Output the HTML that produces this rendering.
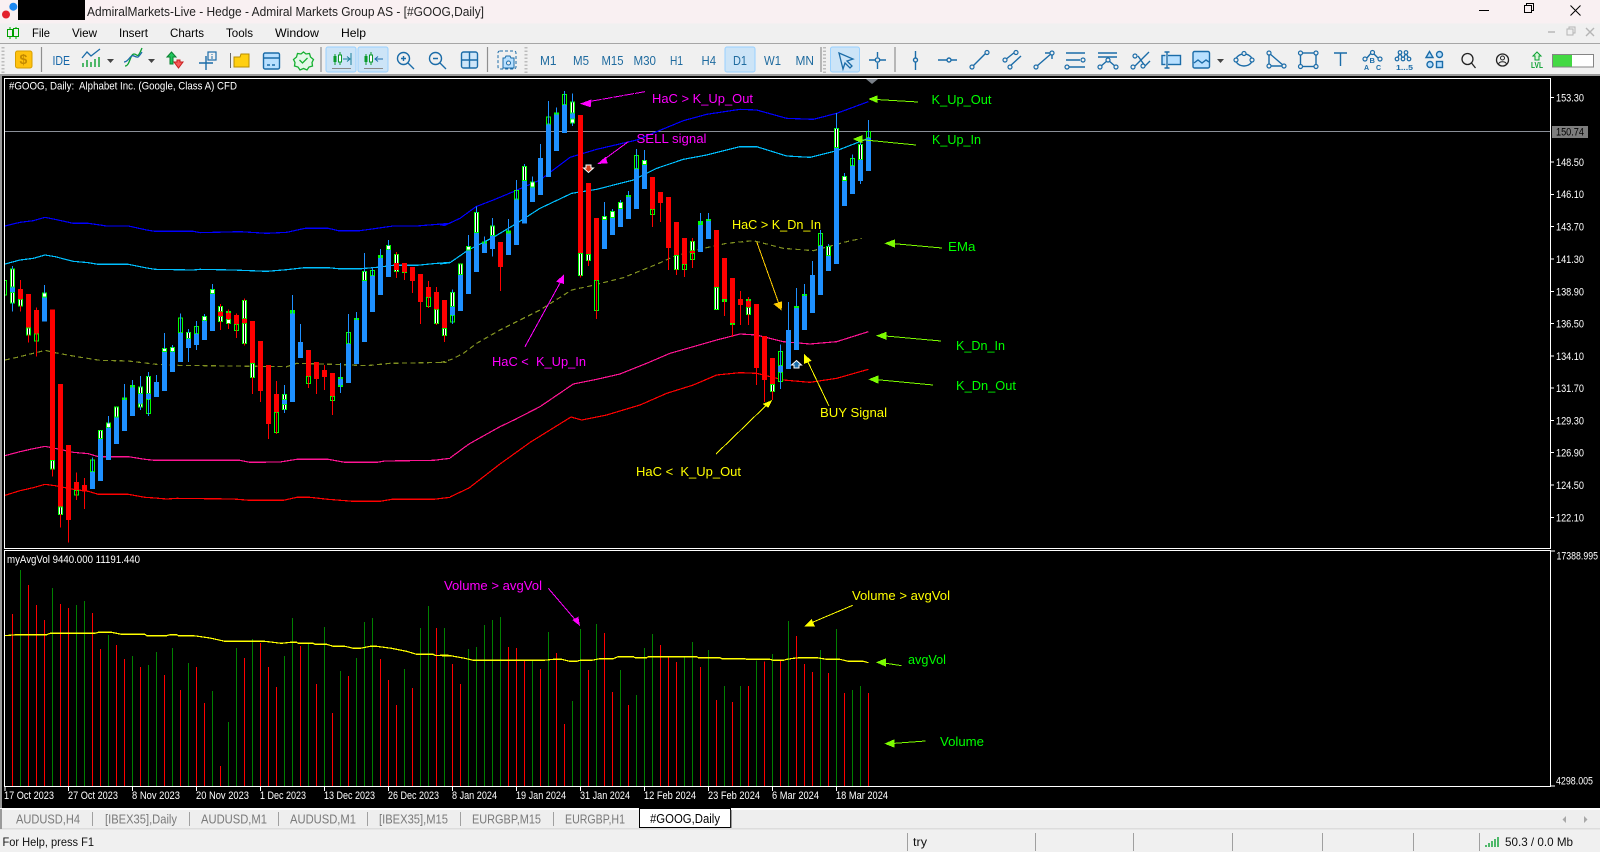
<!DOCTYPE html>
<html><head><meta charset="utf-8"><title>AdmiralMarkets-Live</title>
<style>
html,body{margin:0;padding:0;background:#000;width:1600px;height:852px;overflow:hidden}
svg{display:block}
text{font-family:"Liberation Sans",sans-serif;font-size:12px;white-space:pre}
.m{fill:#000}
.tf{fill:#1f6b9f;font-size:13px}
.w{fill:#fff;font-size:11px}
.a{font-size:13px}
.tab{fill:#7a7a7a;font-size:13px}
.c{fill:none;stroke:#1b6ca8;stroke-width:1.4}
.cf{fill:#b8e0ff;stroke:#1b6ca8;stroke-width:1.4}
.n{fill:#f0f0f0;stroke:#1b6ca8;stroke-width:1.2}
.crisp path,.crisp polyline{fill:none;shape-rendering:crispEdges}
</style></head><body>
<svg xmlns="http://www.w3.org/2000/svg" width="1600" height="852" viewBox="0 0 1600 852">
<defs><clipPath id="cp"><rect x="5" y="79" width="1545" height="469"/></clipPath></defs>
<rect width="1600" height="852" fill="#000"/>
<!-- title bar -->
<rect width="1600" height="23.5" fill="#f9f0f2"/>
<circle cx="6" cy="14.5" r="4" fill="#e3202c"/><circle cx="13.3" cy="6.7" r="4" fill="#1e88f0"/>
<rect x="18" width="67" height="20" fill="#000"/>
<text x="87" y="16" textLength="397" lengthAdjust="spacingAndGlyphs" style="font-size:13px" fill="#222">AdmiralMarkets-Live - Hedge - Admiral Markets Group AS - [#GOOG,Daily]</text>
<path d="M1479 10.5H1489" stroke="#000" fill="none"/>
<path d="M1524.5 12.5h7v-7h-7zM1526.5 5V3.5h7v7H1532" stroke="#000" fill="none"/>
<path d="M1570.5 5.5l10 10M1580.5 5.5l-10 10" stroke="#000" fill="none"/>
<!-- menu -->
<rect y="23.5" width="1600" height="20" fill="#f0f0f0"/>
<path d="M10 27v12M16 27v12" stroke="#00a000" fill="none"/><rect x="7.5" y="29.5" width="5" height="7" fill="#f0f0f0" stroke="#00a000"/><rect x="13.5" y="28.5" width="5" height="8" fill="#f0f0f0" stroke="#00a000"/>
<text class="m" x="32" y="37" textLength="18" lengthAdjust="spacingAndGlyphs">File</text>
<text class="m" x="72" y="37" textLength="25" lengthAdjust="spacingAndGlyphs">View</text>
<text class="m" x="119" y="37" textLength="29" lengthAdjust="spacingAndGlyphs">Insert</text>
<text class="m" x="170" y="37" textLength="34" lengthAdjust="spacingAndGlyphs">Charts</text>
<text class="m" x="226" y="37" textLength="27" lengthAdjust="spacingAndGlyphs">Tools</text>
<text class="m" x="275" y="37" textLength="44" lengthAdjust="spacingAndGlyphs">Window</text>
<text class="m" x="341" y="37" textLength="25" lengthAdjust="spacingAndGlyphs">Help</text>
<path d="M1548 32h7" stroke="#b5b5b5" stroke-width="1.4"/>
<path d="M1567 29h6v6h-6zM1569 29v-2h6v6h-2" stroke="#b5b5b5" fill="none"/>
<path d="M1586 28l8 8M1594 28l-8 8" stroke="#b5b5b5" stroke-width="1.4"/>
<!-- toolbar -->
<rect y="43" width="1600" height="33" fill="#f0f0f0"/>
<rect y="43" width="1600" height="1" fill="#a6a6a6"/>
<rect y="74" width="1600" height="2" fill="#9c9c9c"/>
<path d="M3 47v26M526 47v26M824.5 47v26" stroke="#bcbcbc" stroke-width="3" stroke-dasharray="1.5 2" fill="none"/>
<rect x="15.5" y="51" width="16.5" height="17" rx="2" fill="#ffc20e" stroke="#d79f00"/>
<text x="19.5" y="64" style="font-size:14px;font-weight:bold" fill="#c48a00">$</text>
<path d="M41.5 47v25M321 47v25M487.5 47v25M821 47v25M895 47v25" stroke="#8f8f8f" stroke-width="1.2" fill="none"/>
<text x="52.5" y="65" textLength="17.5" lengthAdjust="spacingAndGlyphs" style="font-size:13px" fill="#1566a8">IDE</text>
<!-- chart icon -->
<path d="M83 67v-4M87 67v-7M91 67v-5M95 67v-8M99 67v-10" stroke="#0aa030" stroke-width="1.4" fill="none"/>
<path d="M82 58l5-6 4 4 9-7" stroke="#1b6ca8" stroke-width="1.3" fill="none"/>
<path d="M107 59h7l-3.5 4z" fill="#444"/>
<path d="M125 66c5 0 5-12 9-12s3 6 8-6" stroke="#0aa030" stroke-width="1.3" fill="none"/><path d="M124 62c5 0 6-8 10-6s4 2 8-4" stroke="#1b6ca8" stroke-width="1.3" fill="none"/>
<path d="M148 59h7l-3.5 4z" fill="#444"/>
<path d="M167 57l4.5-5 4.5 5h-3v7h-3v-7z" fill="#22c55e" stroke="#0a8030"/><path d="M174 62h3v-2h3v2h3l-4.5 6z" fill="#f65a5a" stroke="#c81e1e"/>
<path d="M199 63h14M206 56v14" class="c"/><rect x="208" y="52" width="8" height="8" class="n"/><path d="M212 54v1M212 56v3" stroke="#1b6ca8"/>
<path d="M230.5 53v15" stroke="#666" fill="none"/><path d="M234 57h6l1-3h8v13h-15z" fill="#ffcf0f" stroke="#b78c00"/>
<rect x="263.5" y="53" width="16" height="16" rx="1.5" class="cf"/><path d="M263.5 58h16M267 65h3M272 65h3" class="c"/>
<path d="M303.500 52l2.500 2 3.500-.5 1 3.500 3 2.500-1.500 3 .5 3.500-3.500 1-2 3-3.500-1.500-3.500 1.500-2-3-3.500-1 .5-3.500-1.500-3 3-2.500 1-3.500 3.500.5z" fill="#e4f8e8" stroke="#15b030" stroke-width="1.3"/><path d="M299.500 60l3 3 5-5" fill="none" stroke="#15b030" stroke-width="1.3"/>
<rect x="326" y="47" width="30" height="25" rx="2" fill="#cce4f7" stroke="#99d1ff"/><rect x="358" y="47" width="30" height="25" rx="2" fill="#cce4f7" stroke="#99d1ff"/>
<path d="M335 54v11M340 52v13" stroke="#0a9a2a" fill="none"/><rect x="333.5" y="56" width="3" height="6" fill="#0a9a2a"/><rect x="338.5" y="55" width="3" height="7" fill="#fff" stroke="#0a9a2a"/>
<path d="M343 59h6M347 56.5l3 2.5-3 2.5M351 53v12" stroke="#1b7f9a" fill="none"/><path d="M332 68.5h19" stroke="#8a8a8a"/>
<path d="M366 54v11M371 52v13" stroke="#0a9a2a" fill="none"/><rect x="364.5" y="56" width="3" height="6" fill="#0a9a2a"/><rect x="369.5" y="55" width="3" height="7" fill="#fff" stroke="#0a9a2a"/>
<path d="M375 59h8M378 56.5l-3 2.5 3 2.5" stroke="#1b6ca8" fill="none"/><path d="M364 68.5h19" stroke="#8a8a8a"/>
<circle cx="403.5" cy="58.5" r="6" class="c"/><path d="M408 63l6 6M401 58.5h5M403.5 56v5" class="c"/>
<circle cx="435.5" cy="58.5" r="6" class="c"/><path d="M440 63l6 6M433 58.5h5" class="c"/>
<rect x="461.5" y="52" width="16" height="16" rx="2" class="cf" fill-opacity=".6"/><path d="M469.5 52v16M461.5 60h16" class="c"/>
<rect x="498" y="51" width="18" height="18" rx="2" fill="none" stroke="#1b6ca8" stroke-dasharray="3 2"/><path d="M503 58h2l1-2h4l1 2h3v10h-11z" fill="#b8e0ff" stroke="#1b6ca8"/><circle cx="508.5" cy="63" r="2" fill="#f0f0f0" stroke="#1b6ca8"/>
<!-- timeframes -->
<rect x="725" y="47" width="30" height="25" rx="2" fill="#cce4f7" stroke="#99d1ff"/>
<text class="tf" x="540" y="65" textLength="16.5" lengthAdjust="spacingAndGlyphs">M1</text>
<text class="tf" x="573" y="65" textLength="16" lengthAdjust="spacingAndGlyphs">M5</text>
<text class="tf" x="601.5" y="65" textLength="22" lengthAdjust="spacingAndGlyphs">M15</text>
<text class="tf" x="633.5" y="65" textLength="22.5" lengthAdjust="spacingAndGlyphs">M30</text>
<text class="tf" x="670" y="65" textLength="13" lengthAdjust="spacingAndGlyphs">H1</text>
<text class="tf" x="701.5" y="65" textLength="14.5" lengthAdjust="spacingAndGlyphs">H4</text>
<text class="tf" x="733" y="65" textLength="14" lengthAdjust="spacingAndGlyphs">D1</text>
<text class="tf" x="764" y="65" textLength="17" lengthAdjust="spacingAndGlyphs">W1</text>
<text class="tf" x="795.5" y="65" textLength="18.5" lengthAdjust="spacingAndGlyphs">MN</text>
<!-- draw tools -->
<rect x="830.5" y="47" width="29" height="25" rx="2" fill="#cce4f7" stroke="#99d1ff"/>
<path d="M839 53l14 6-6 2 5 5-2 2-5-5-2 6z" fill="#cce4f7" stroke="#1b6ca8" stroke-width="1.3"/>
<path d="M869 60h6M880 60h6M877.5 52v5M877.5 63v6" class="c"/><circle cx="877.5" cy="60" r="2.2" class="c"/>
<path d="M915.5 51v7M915.5 62v8" class="c"/><circle cx="915.5" cy="60" r="2" class="c"/>
<path d="M938 60h9M951 60h6" class="c"/><circle cx="949" cy="60" r="2" class="c"/>
<path d="M973 66l13-13" class="c"/><circle cx="972" cy="67" r="2" class="n"/><circle cx="987" cy="52.5" r="2" class="n"/>
<path d="M1005 60l10-8M1009 67l12-11" class="c"/><circle cx="1005" cy="60" r="2" class="n"/><circle cx="1016" cy="52.5" r="2" class="n"/><circle cx="1010" cy="67" r="2" class="n"/>
<path d="M1037 66l15-13M1045 53h7v6" class="c"/><circle cx="1036" cy="67" r="2" class="n"/><circle cx="1052" cy="53" r="2" class="n"/>
<path d="M1066 53h19M1066 60h14M1068 67h17" class="c"/><circle cx="1083" cy="60" r="2" class="n"/><circle cx="1067" cy="67" r="2" class="n"/>
<path d="M1098 53h19M1098 57h19M1100 67l8-7 8 7" class="c"/><circle cx="1100" cy="67" r="2" class="n"/><circle cx="1108" cy="60" r="2" class="n"/><circle cx="1116" cy="67" r="2" class="n"/>
<path d="M1134 67l15-15M1138 56l7 10M1144 67l6-6" class="c"/><circle cx="1133" cy="67" r="2" class="n"/><circle cx="1135" cy="56" r="2" class="n"/><circle cx="1143" cy="66" r="2" class="n"/>
<rect x="1162" y="55.5" width="18.5" height="9" class="cf"/><rect x="1165.5" y="52.5" width="2.5" height="15" fill="#f0f0f0"/><path d="M1167 52v16M1164.5 52h5M1164.5 68h5" class="c"/>
<rect x="1193" y="51.5" width="16.5" height="16.5" rx="1.5" class="cf"/><path d="M1194 63l4-3 4 3 4-3 3 2" class="c"/>
<path d="M1217 59h7l-3.5 4z" fill="#444"/>
<ellipse cx="1244" cy="60" rx="8" ry="6" class="c"/><circle cx="1244" cy="53.5" r="2" class="n"/><circle cx="1236" cy="60" r="2" class="n"/><circle cx="1252" cy="60" r="2" class="n"/>
<path d="M1269 53v13h15z" class="c"/><circle cx="1269" cy="53" r="2" class="n"/><circle cx="1269" cy="66" r="2" class="n"/><circle cx="1284" cy="66" r="2" class="n"/>
<rect x="1300.5" y="53" width="15.5" height="13.5" class="c"/><circle cx="1300.5" cy="53" r="2" class="n"/><circle cx="1316" cy="53" r="2" class="n"/><circle cx="1300.5" cy="66.5" r="2" class="n"/><circle cx="1316" cy="66.5" r="2" class="n"/>
<path d="M1334 53h13M1340.5 53v13" class="c"/>
<path d="M1366 59l6-7 7 7" class="c"/><circle cx="1372.5" cy="52.5" r="2" class="n"/><circle cx="1365" cy="59" r="2" class="n"/><circle cx="1380" cy="59" r="2" class="n"/>
<text x="1369.5" y="63" style="font-size:7.5px;font-weight:bold" fill="#1b6ca8">B</text><text x="1364" y="70" style="font-size:7px;font-weight:bold" fill="#1b6ca8">A</text><text x="1376" y="70" style="font-size:7px;font-weight:bold" fill="#1b6ca8">C</text>
<path d="M1397 59l3-6 3 6 3-6 3 6" class="c"/><circle cx="1400" cy="52.5" r="1.8" class="n"/><circle cx="1406" cy="52.5" r="1.8" class="n"/><circle cx="1397" cy="59" r="1.8" class="n"/><circle cx="1403" cy="59" r="1.8" class="n"/><circle cx="1409" cy="59" r="1.8" class="n"/>
<text x="1396" y="70" textLength="17" lengthAdjust="spacingAndGlyphs" style="font-size:7.5px;font-weight:bold" fill="#1b6ca8">1...5</text>
<path d="M1429.5 51.5l3.500 6h-7z" class="cf"/><circle cx="1439.5" cy="54.5" r="3" class="cf"/><circle cx="1430" cy="64.5" r="3" class="cf"/><rect x="1436.5" y="61.5" width="6" height="6" class="cf"/>
<circle cx="1467.5" cy="59" r="5.5" fill="none" stroke="#222" stroke-width="1.3"/><path d="M1471.5 63l4 5" stroke="#222" stroke-width="1.3"/>
<circle cx="1502.5" cy="60" r="6" fill="none" stroke="#222" stroke-width="1.3"/><circle cx="1502.5" cy="58" r="2" fill="none" stroke="#222"/><path d="M1498.5 64c1-3 7-3 8 0" fill="none" stroke="#222"/>
<path d="M1537 52l4 4h-2v4h-4v-4h-2z" fill="#d8f5d8" stroke="#0aa030"/>
<text x="1531" y="68" textLength="12" lengthAdjust="spacingAndGlyphs" style="font-size:8px;font-weight:bold" fill="#0aa030">LVL</text>
<rect x="1552.5" y="54.5" width="41" height="12.5" fill="#fff" stroke="#858585"/><rect x="1553" y="55" width="19" height="11.5" fill="#43d943"/>
<!-- chart frame -->
<rect x="0" y="76" width="2" height="733" fill="#9a9a9a"/>
<rect x="4" y="78" width="1547" height="1" fill="#fff"/><rect x="4" y="78" width="1" height="471" fill="#fff"/><rect x="1550" y="78" width="1" height="471" fill="#fff"/><rect x="4" y="548" width="1547" height="1" fill="#fff"/>
<rect x="4" y="550" width="1547" height="1" fill="#fff"/><rect x="4" y="550" width="1" height="237" fill="#fff"/><rect x="1550" y="550" width="1" height="237" fill="#fff"/><rect x="4" y="786" width="1547" height="1" fill="#fff"/>
<rect x="5" y="131" width="1545" height="1" fill="#8a8f98"/>
<path d="M866 79h12l-6 5z" fill="#7a8088"/>
<g clip-path="url(#cp)" class="crisp">
<!-- left lines -->
<g transform="translate(0,80) scale(.33333)"><polyline stroke="#0000ff" stroke-width="3.6" points="15,438 60,427 100,422 135,412 165,418 220,430 265,430 320,438 385,438 440,450 465,454 580,454 600,458 720,455 800,460 860,457 915,445 985,445 1015,452 1080,452 1130,445 1180,438 1250,438 1300,434 1350,430"/></g>
<g transform="translate(0,230) scale(.33333)" stroke-width="3.6">
<polyline stroke="#00bfff" points="15,102 60,90 100,85 135,75 165,80 220,94 265,98 295,103 385,103 435,113 465,118 580,120 600,118 700,120 800,124 860,119 915,113 985,113 1015,116 1085,116 1130,112 1180,106 1250,106 1300,101 1350,97"/>
<polyline stroke="#ff1493" points="15,677 60,665 100,656 135,649 165,655 220,667 265,671 295,680 385,680 435,688 465,691 720,691 750,697 840,696 890,688 985,688 1035,697 1130,697 1155,693 1300,691 1350,685"/>
<polyline stroke="#ff0000" points="15,796 60,782 100,773 135,763 165,767 220,778 265,784 295,793 385,793 435,802 465,804 500,807 530,805 700,807 750,811 850,811 890,802 930,802 985,808 1060,814 1140,814 1175,808 1300,808 1350,802"/>
<polyline stroke="#7f8f20" stroke-dasharray="15 10" points="15,390 60,380 135,361 165,368 230,380 300,391 385,393 470,403 530,406 860,410 890,400 1000,403 1100,407 1170,400 1340,397"/>
</g>
<!-- mid lines -->
<g transform="translate(440,80) scale(.33333)" stroke-width="3.6">
<polyline stroke="#0000ff" points="0,435 15,436 60,415 108,380 160,360 220,335 300,300 390,232 470,208 590,180 650,155 730,122 800,103 900,88 950,90 1040,115 1120,118 1190,100 1285,65"/>
<polyline stroke="#00bfff" points="0,552 30,548 85,510 160,472 230,430 300,385 395,340 470,328 580,300 650,265 730,238 800,225 900,200 950,200 1040,228 1110,232 1190,212 1285,175"/>
<polyline stroke="#ff1493" points="30,1134 87,1092 180,1040 222,1020 300,980 400,912 470,898 540,882 620,850 690,820 760,800 830,780 900,762 950,765 1030,785 1110,792 1190,785 1285,755"/>
<polyline stroke="#ff0000" points="30,1251 87,1224 180,1152 272,1086 393,1011 425,1020 500,1005 600,975 680,940 760,915 830,885 900,878 950,880 1030,900 1110,907 1190,895 1285,868"/>
<polyline stroke="#7f8f20" stroke-dasharray="15 10" points="0,848 35,838 70,820 110,790 180,750 250,715 300,690 395,630 450,618 550,593 650,553 700,530 790,505 860,490 940,482 1030,505 1120,512 1220,485 1265,475"/>
</g>
<!-- candles left -->
<g transform="translate(0,230) scale(.33333)">
<path stroke="#00ff00" stroke-width="15" d="M13 150V197M109 310V335M229 780V797M277 688V726M445 507V552M541 262V309M589 288V312M709 282V303M829 546V609M925 438V462M997 498V513M1045 306V342M1117 120V138M1285 201V231M37 115V172M37 186V220M61 207V230M85 292V317M133 187V202M157 690V718M181 830V855M301 600V627M325 577V594M349 529V562M373 502V510M397 465V473M421 469V492M421 520V533M445 438V492M493 354V366M517 351V366M565 306V327M613 258V273M637 177V192M661 228V246M661 258V276M685 243V249M685 267V282M733 210V267M733 279V342M757 399V444M853 492V510M853 522V540M877 240V250M1021 441V447M1021 465V471M1069 264V270M1093 123V153M1141 75V84M1165 45V60M1189 72V126M1213 126V129M1309 237V282M1333 294V318"/>
<path stroke="#000" stroke-width="9" d="M13 153V194M109 313V332M229 783V794M277 691V723M445 510V549M541 265V306M589 291V309M709 285V300M829 549V606M925 441V459M997 501V510M1045 309V339M1117 123V135M1285 204V228"/>
<path stroke="#1e90ff" stroke-width="3" d="M37 108V245M133 165V190M277 682V726M325 558V600M373 462V510M397 450V480M421 438V540M445 426V558M469 435V460M493 309V360M517 345V370M541 250V310M565 297V396M589 273V360M613 252V280M637 162V190M853 465V549M877 195V250M901 282V340M1021 399V489M1045 252V345M1069 246V270M1093 69V130M1117 111V140M1141 57V90M1165 30V60"/>
<path stroke="#ff0000" stroke-width="3" d="M61 150V245M85 300V338M109 232V380M157 700V740M181 840V893M205 860V938M229 727V810M253 744V837M661 222V300M685 238V297M709 250V324M733 205V347M757 430V492M781 470V516M805 570V627M829 453V612M925 430V474M949 396V492M973 405V480M997 490V555M1189 66V144M1213 120V150M1237 140V189M1261 200V282M1285 153V234M1309 171V285M1333 310V336"/>
<path stroke="#fff" stroke-width="9" d="M37 118V169M37 189V217M61 210V227M85 295V314M133 190V199M157 693V715M181 833V852M301 603V624M325 580V591M349 532V559M421 472V489M421 523V530M445 441V489M493 357V363M517 354V363M565 309V324M613 261V270M637 180V189M661 231V243M661 261V273M685 270V279M733 213V264M733 282V339M757 402V441M853 495V507M853 525V537M1093 126V150M1165 48V57M1189 75V123M1309 240V279M1333 297V315"/>
<path stroke="#000" stroke-width="3" d="M37 118V169M37 189V217M61 210V227M85 295V314M157 693V715M181 833V852M301 603V624M349 532V559M421 472V489M421 523V530M445 441V489M565 309V324M661 231V243M661 261V273M733 213V264M733 282V339M757 402V441M853 495V507M853 525V537M1093 126V150M1189 75V123M1309 240V279M1333 297V315"/>
<path stroke="#1e90ff" stroke-width="15" d="M37 172V186M133 202V275M277 726V777M301 627V753M325 594V690M349 562V642M373 510V603M397 473V558M421 492V520M445 492V507M469 456V501M493 366V483M517 366V426M541 309V396M565 327V354M589 312V345M613 273V330M637 192V303M853 510V522M877 250V516M901 336V384M1021 447V465M1045 342V459M1069 270V402M1093 153V336M1117 138V246M1141 84V195M1165 60V141"/>
<path stroke="#ff0000" stroke-width="15" d="M61 177V207M85 192V292M109 240V310M157 238V690M181 462V830M205 645V870M229 756V780M253 765V785M661 246V258M685 249V267M709 255V282M733 267V279M757 273V399M781 333V483M805 405V582M829 492V546M925 360V438M949 396V447M973 420V441M997 429V498M1189 99V120M1213 99V126M1237 111V153M1261 132V216M1285 171V201M1309 186V237M1333 210V294"/>
</g>
<!-- candles right -->
<g transform="translate(440,80) scale(.33333)">
<path stroke="#00ff00" stroke-width="15" d="M37 705V728M325 109V133M373 42V75M469 600V693M589 225V267M637 387V405M733 552V570M757 519V540M1021 813V858M1021 876V906M1141 459V498M1237 234V258M1285 153V174M37 636V681M61 550V585M85 498V512M109 396V459M133 484V490M157 436V468M205 451V460M229 330V358M253 258V303M277 304V322M349 97V103M397 64V100M397 115V130M421 519V588M445 522V543M493 408V420M517 393V414M541 366V387M565 345V351M613 240V255M709 525V570M757 483V513M781 423V435M805 417V423M829 621V690M853 657V666M877 729V735M925 657V663M925 681V705M997 912V936M1069 678V684M1093 642V648M1165 498V528M1189 144V204M1213 288V303M1261 192V240"/>
<path stroke="#000" stroke-width="9" d="M37 708V725M325 112V130M373 45V72M469 603V690M589 228V264M637 390V402M733 555V567M757 522V537M1021 816V855M1021 879V903M1141 462V495M1237 237V255M1285 156V171M229 333V355"/>
<path stroke="#1e90ff" stroke-width="3" d="M37 628V732M85 465V500M109 380V400M133 470V490M157 414V530M205 417V455M229 300V360M253 252V260M277 290V310M301 192V240M325 63V135M349 82V100M373 33V75M397 40V138M493 366V410M517 387V395M541 360V370M565 333V350M589 207V270M613 210V245M781 399V430M805 399V420M1021 793V927M1045 666V755M1069 624V680M1093 612V650M1117 543V590M1141 450V500M1165 492V500M1189 99V150M1213 279V295M1237 223V260M1261 180V312M1285 120V175"/>
<path stroke="#ff0000" stroke-width="3" d="M181 555V633M421 580V593M445 535V558M469 600V717M637 387V441M661 360V426M685 500V570M709 560V585M733 552V591M757 474V564M853 660V708M877 730V771M901 633V735M925 651V735M949 860V915M973 895V966M997 930V960"/>
<path stroke="#fff" stroke-width="9" d="M37 639V678M61 553V582M85 501V509M109 399V456M157 439V465M253 261V300M277 307V319M397 67V97M397 118V127M421 522V585M445 525V540M493 411V417M517 396V411M541 369V384M613 243V252M709 528V567M757 486V510M829 624V687M925 684V702M997 915V933M1165 501V525M1189 147V201M1213 291V300M1261 195V237"/>
<path stroke="#000" stroke-width="3" d="M37 639V678M61 553V582M109 399V456M157 439V465M253 261V300M397 67V97M421 522V585M445 525V540M709 528V567M757 486V510M829 624V687M925 684V702M997 915V933M1165 501V525M1189 147V201M1261 195V237"/>
<path stroke="#1e90ff" stroke-width="15" d="M37 681V705M61 585V693M85 512V642M109 459V576M133 490V519M157 468V507M205 460V525M229 358V495M253 303V430M277 322V366M301 234V345M325 133V291M349 103V213M373 75V159M397 100V115M493 420V507M517 414V465M541 387V441M565 351V417M589 267V387M613 255V327M781 435V516M805 423V477M1021 858V876M1045 750V867M1069 684V810M1093 648V750M1117 585V699M1141 498V645M1165 528V573M1189 204V552M1213 303V378M1237 258V342M1261 240V303M1285 174V273"/>
<path stroke="#ff0000" stroke-width="15" d="M181 486V561M421 105V519M445 309V522M469 414V600M637 291V387M661 336V369M685 351V504M709 426V525M733 474V552M757 513V519M829 450V621M853 534V657M877 594V729M901 657V675M925 663V681M949 672V864M973 768V900M997 834V912"/>
</g>
</g>
<!-- signal markers -->
<path d="M586 165h5v3h2.500l-5 4.500-5-4.500h2.500z" fill="#d8401c" stroke="#fff" stroke-width="1"/>
<path d="M796.500 360.500l5 4.500h-2.500v3h-5v-3h-2.500z" fill="#1b6ca8" stroke="#fff" stroke-width="1"/>
<!-- arrows -->
<g transform="translate(440,80) scale(.33333)" stroke-width="3" shape-rendering="crispEdges">
<path d="M615 35L440 66" stroke="#ff00ff" fill="none" stroke-dasharray="30 3"/><path d="M420 71L455 58L452 82z" fill="#ff00ff"/>
<path d="M565 185L490 240" stroke="#ff00ff" fill="none"/><path d="M472 252L497 230L503 250z" fill="#ff00ff"/>
<path d="M255 800L365 600" stroke="#ff00ff" fill="none"/><path d="M372 583L348 605L372 612z" fill="#ff00ff"/>
<path d="M950 485L1018 675" stroke="#ffcc00" fill="none"/><path d="M1025 692L1000 672L1026 664z" fill="#ffcc00"/>
<path d="M1167 978L1100 838" stroke="#ffff00" fill="none"/><path d="M1092 822L1092 852L1115 842z" fill="#ffff00"/>
<path d="M828 1122L985 970" stroke="#ffff00" fill="none"/><path d="M997 960L968 972L985 983z" fill="#ffff00"/>
<path d="M1300 58L1434 66" stroke="#7cfc00" fill="none"/><path d="M1285 57L1312 46L1312 69z" fill="#7cfc00"/>
<path d="M1255 178L1428 195" stroke="#7cfc00" fill="none"/><path d="M1238 177L1268 165L1268 190z" fill="#7cfc00"/>
<path d="M1350 490L1506 504" stroke="#7cfc00" fill="none"/><path d="M1333 490L1365 478L1365 503z" fill="#7cfc00"/>
<path d="M1325 767L1503 783" stroke="#7cfc00" fill="none"/><path d="M1308 767L1340 755L1340 780z" fill="#7cfc00"/>
<path d="M1300 898L1479 915" stroke="#7cfc00" fill="none"/><path d="M1285 898L1315 886L1315 911z" fill="#7cfc00"/>
</g>
<!-- volume -->
<g class="crisp">
<g transform="translate(0,550) scale(.33333)" stroke-width="3">
<path stroke="#ff0000" d="M37 192V708M85 105V708M109 165V708M133 210V708M181 162V708M205 174V708M277 189V708M301 297V708M349 285V708M373 327V708M421 351V708M493 375V708M541 420V708M589 351V708M613 459V708M661 648V708M733 324V708M781 279V708M805 351V708M829 411V708M901 288V708M949 402V708M997 489V708M1045 378V708M1141 327V708M1165 390V708M1189 465V708M1237 414V708M1309 234V708"/>
<path stroke="#008000" d="M61 60V708M157 114V708M229 165V708M253 153V708M325 255V708M397 318V708M445 345V708M469 306V708M517 294V708M565 339V708M637 423V708M685 516V708M709 294V708M757 267V708M853 318V708M877 204V708M925 282V708M973 231V708M1021 363V708M1069 324V708M1093 216V708M1117 204V708M1213 357V708M1261 234V708M1285 168V708M1333 234V708"/>
<polyline stroke="#ffff00" stroke-width="3.6" points="15,257 50,254 140,254 150,250 285,250 295,247 335,247 365,253 435,253 440,257 500,257 510,254 530,254 535,257 580,257 630,264 675,274 795,274 845,280 870,277 890,277 895,280 940,280 945,283 980,283 1000,289 1035,289 1060,295 1080,295 1110,289 1130,289 1175,295 1220,304 1250,313 1300,313 1305,316 1350,318"/>
</g>
<g transform="translate(440,550) scale(.33333)" stroke-width="3">
<path stroke="#ff0000" d="M37 342V708M61 402V708M205 291V708M229 294V708M253 331V708M301 357V708M349 309V708M373 522V708M445 360V708M493 249V708M517 426V708M565 465V708M661 285V708M685 321V708M709 336V708M781 351V708M829 450V708M877 456V708M925 408V708M973 334V708M1021 328V708M1069 258V708M1093 342V708M1117 366V708M1165 369V708M1213 429V708M1285 429V708"/>
<path stroke="#008000" d="M85 297V708M109 291V708M133 225V708M157 210V708M181 201V708M277 331V708M325 246V708M397 453V708M421 237V708M469 222V708M541 360V708M589 435V708M613 294V708M637 252V708M733 321V708M757 276V708M805 300V708M853 408V708M901 408V708M949 331V708M997 312V708M1045 213V708M1141 300V708M1189 237V708M1237 420V708M1261 408V708"/>
<polyline stroke="#ffff00" stroke-width="3.6" points="0,316 25,316 75,325 100,331 310,331 340,328 365,328 390,334 410,334 420,331 455,331 480,326 520,326 535,320 580,320 585,323 620,323 625,320 770,320 775,323 840,323 845,326 915,326 920,328 990,328 1000,331 1030,331 1040,328 1060,325 1080,323 1130,323 1160,328 1200,328 1225,334 1270,334 1285,338"/>
</g>
</g>
<g transform="translate(440,550) scale(.33333)" stroke-width="3" shape-rendering="crispEdges">
<path d="M325 115L408 212" stroke="#ff00ff" fill="none"/><path d="M420 228L397 210L415 200z" fill="#ff00ff"/>
<path d="M1238 166L1115 218" stroke="#ffff00" fill="none"/><path d="M1092 230L1125 230L1115 207z" fill="#ffff00"/>
<path d="M1325 338L1385 347" stroke="#7cfc00" fill="none"/><path d="M1308 337L1338 325L1338 350z" fill="#7cfc00"/>
<path d="M1350 581L1456 573" stroke="#7cfc00" fill="none"/><path d="M1333 581L1363 568L1363 593z" fill="#7cfc00"/>
</g>
<!-- annotations -->
<text class="a" fill="#ff00ff" x="652" y="103" textLength="101" lengthAdjust="spacingAndGlyphs">HaC &gt; K_Up_Out</text>
<text class="a" fill="#ff00ff" x="636.5" y="143" textLength="70" lengthAdjust="spacingAndGlyphs">SELL signal</text>
<text class="a" fill="#ffff00" x="732" y="229" textLength="89" lengthAdjust="spacingAndGlyphs">HaC &gt; K_Dn_In</text>
<text class="a" fill="#ff00ff" x="492" y="366" textLength="94" lengthAdjust="spacingAndGlyphs">HaC &lt;  K_Up_In</text>
<text class="a" fill="#ffff00" x="820" y="417" textLength="67" lengthAdjust="spacingAndGlyphs">BUY Signal</text>
<text class="a" fill="#ffff00" x="636" y="476" textLength="105" lengthAdjust="spacingAndGlyphs">HaC &lt;  K_Up_Out</text>
<text class="a" fill="#00ff00" x="931.5" y="104" textLength="60" lengthAdjust="spacingAndGlyphs">K_Up_Out</text>
<text class="a" fill="#00ff00" x="932" y="144" textLength="49" lengthAdjust="spacingAndGlyphs">K_Up_In</text>
<text class="a" fill="#00ff00" x="948" y="251" textLength="27.5" lengthAdjust="spacingAndGlyphs">EMa</text>
<text class="a" fill="#00ff00" x="956" y="350" textLength="49" lengthAdjust="spacingAndGlyphs">K_Dn_In</text>
<text class="a" fill="#00ff00" x="956" y="390" textLength="60" lengthAdjust="spacingAndGlyphs">K_Dn_Out</text>
<text class="a" fill="#ff00ff" x="444" y="590" textLength="98" lengthAdjust="spacingAndGlyphs">Volume &gt; avgVol</text>
<text class="a" fill="#ffff00" x="852" y="600" textLength="98" lengthAdjust="spacingAndGlyphs">Volume &gt; avgVol</text>
<text class="a" fill="#00ff00" x="908" y="664" textLength="38" lengthAdjust="spacingAndGlyphs">avgVol</text>
<text class="a" fill="#00ff00" x="940" y="746" textLength="44" lengthAdjust="spacingAndGlyphs">Volume</text>
<text class="w" x="9" y="89.5" textLength="228" lengthAdjust="spacingAndGlyphs">#GOOG, Daily:  Alphabet Inc. (Google, Class A) CFD</text>
<text class="w" x="7" y="563" textLength="133" lengthAdjust="spacingAndGlyphs">myAvgVol 9440.000 11191.440</text>
<!-- price axis -->
<path d="M1551 97.5h3M1551 162h3M1551 194.5h3M1551 226.5h3M1551 259h3M1551 291.5h3M1551 323.5h3M1551 356h3M1551 388h3M1551 420.5h3M1551 452.5h3M1551 485h3M1551 517.5h3M1551 551h4M1551 786h4" stroke="#fff" fill="none"/>
<text class="w" x="1556" y="101.5" textLength="28" lengthAdjust="spacingAndGlyphs">153.30</text>
<rect x="1552" y="126" width="36" height="12" fill="#7d7d7d"/>
<text x="1556" y="135.5" textLength="28" lengthAdjust="spacingAndGlyphs" style="font-size:11px" fill="#000">150.74</text>
<text class="w" x="1556" y="166" textLength="28" lengthAdjust="spacingAndGlyphs">148.50</text>
<text class="w" x="1556" y="198" textLength="28" lengthAdjust="spacingAndGlyphs">146.10</text>
<text class="w" x="1556" y="230.5" textLength="28" lengthAdjust="spacingAndGlyphs">143.70</text>
<text class="w" x="1556" y="263" textLength="28" lengthAdjust="spacingAndGlyphs">141.30</text>
<text class="w" x="1556" y="295.5" textLength="28" lengthAdjust="spacingAndGlyphs">138.90</text>
<text class="w" x="1556" y="327.5" textLength="28" lengthAdjust="spacingAndGlyphs">136.50</text>
<text class="w" x="1556" y="360" textLength="28" lengthAdjust="spacingAndGlyphs">134.10</text>
<text class="w" x="1556" y="392" textLength="28" lengthAdjust="spacingAndGlyphs">131.70</text>
<text class="w" x="1556" y="424.5" textLength="28" lengthAdjust="spacingAndGlyphs">129.30</text>
<text class="w" x="1556" y="456.5" textLength="28" lengthAdjust="spacingAndGlyphs">126.90</text>
<text class="w" x="1556" y="489" textLength="28" lengthAdjust="spacingAndGlyphs">124.50</text>
<text class="w" x="1556" y="521.5" textLength="28" lengthAdjust="spacingAndGlyphs">122.10</text>
<text class="w" x="1556.5" y="559.5" textLength="41.5" lengthAdjust="spacingAndGlyphs">17388.995</text>
<text class="w" x="1556" y="784.5" textLength="37" lengthAdjust="spacingAndGlyphs">4298.005</text>
<!-- date axis -->
<path d="M5 787v4M68.5 787v4M132.5 787v4M196.5 787v4M260.5 787v4M324.5 787v4M388.5 787v4M452.5 787v4M516.5 787v4M580.5 787v4M644.5 787v4M708.5 787v4M772.5 787v4M836.5 787v4" stroke="#fff" fill="none"/>
<text class="w" x="4" y="799" textLength="50" lengthAdjust="spacingAndGlyphs">17 Oct 2023</text>
<text class="w" x="68" y="799" textLength="50" lengthAdjust="spacingAndGlyphs">27 Oct 2023</text>
<text class="w" x="132" y="799" textLength="48" lengthAdjust="spacingAndGlyphs">8 Nov 2023</text>
<text class="w" x="196" y="799" textLength="53" lengthAdjust="spacingAndGlyphs">20 Nov 2023</text>
<text class="w" x="260" y="799" textLength="46" lengthAdjust="spacingAndGlyphs">1 Dec 2023</text>
<text class="w" x="324" y="799" textLength="51" lengthAdjust="spacingAndGlyphs">13 Dec 2023</text>
<text class="w" x="388" y="799" textLength="51" lengthAdjust="spacingAndGlyphs">26 Dec 2023</text>
<text class="w" x="452" y="799" textLength="45" lengthAdjust="spacingAndGlyphs">8 Jan 2024</text>
<text class="w" x="516" y="799" textLength="50" lengthAdjust="spacingAndGlyphs">19 Jan 2024</text>
<text class="w" x="580" y="799" textLength="50" lengthAdjust="spacingAndGlyphs">31 Jan 2024</text>
<text class="w" x="644" y="799" textLength="52" lengthAdjust="spacingAndGlyphs">12 Feb 2024</text>
<text class="w" x="708" y="799" textLength="52" lengthAdjust="spacingAndGlyphs">23 Feb 2024</text>
<text class="w" x="772" y="799" textLength="47" lengthAdjust="spacingAndGlyphs">6 Mar 2024</text>
<text class="w" x="836" y="799" textLength="52" lengthAdjust="spacingAndGlyphs">18 Mar 2024</text>
<!-- tabs -->
<rect y="808" width="1600" height="2" fill="#fff"/>
<rect y="810" width="1600" height="18" fill="#eeeeee"/>
<rect y="828" width="1600" height="1.5" fill="#dcdcdc"/>
<rect x="0" y="809" width="2" height="20" fill="#9a9a9a"/>
<path d="M92.5 812v14M189.5 812v14M278.5 812v14M367.5 812v14M460.5 812v14M553.5 812v14" stroke="#a0a0a0" fill="none"/>
<text class="tab" x="16" y="823.5" textLength="64" lengthAdjust="spacingAndGlyphs">AUDUSD,H4</text>
<text class="tab" x="105" y="823.5" textLength="72" lengthAdjust="spacingAndGlyphs">[IBEX35],Daily</text>
<text class="tab" x="201" y="823.5" textLength="66" lengthAdjust="spacingAndGlyphs">AUDUSD,M1</text>
<text class="tab" x="290" y="823.5" textLength="66" lengthAdjust="spacingAndGlyphs">AUDUSD,M1</text>
<text class="tab" x="379" y="823.5" textLength="69" lengthAdjust="spacingAndGlyphs">[IBEX35],M15</text>
<text class="tab" x="472" y="823.5" textLength="69" lengthAdjust="spacingAndGlyphs">EURGBP,M15</text>
<text class="tab" x="565" y="823.5" textLength="60" lengthAdjust="spacingAndGlyphs">EURGBP,H1</text>
<rect x="639.5" y="808.5" width="91" height="19" fill="#fff" stroke="#000"/>
<path d="M731 810v18" stroke="#444"/>
<text x="650" y="823" textLength="70" lengthAdjust="spacingAndGlyphs" style="font-size:13px" fill="#000">#GOOG,Daily</text>
<path d="M1566 816v7l-3.5-3.5zM1584 816v7l3.5-3.5z" fill="#a8a8a8"/>
<!-- status -->
<rect y="829.5" width="1600" height="22.5" fill="#f0f0f0"/>
<text x="2.5" y="846" textLength="91.5" lengthAdjust="spacingAndGlyphs" fill="#111">For Help, press F1</text>
<path d="M907.5 833v18M1035.5 833v18M1133.5 833v18M1232.5 833v18M1322.5 833v18M1413.5 833v18M1479.5 833v18" stroke="#a0a0a0" fill="none"/>
<text x="913" y="846" textLength="14" lengthAdjust="spacingAndGlyphs" fill="#111">try</text>
<path d="M1486 847v-2M1489 847v-4M1492 847v-6M1495 847v-8M1498 847v-10" stroke="#0aa030" stroke-width="1.4" fill="none"/>
<text x="1505" y="846" textLength="68" lengthAdjust="spacingAndGlyphs" fill="#111">50.3 / 0.0 Mb</text>
</svg>
</body></html>
